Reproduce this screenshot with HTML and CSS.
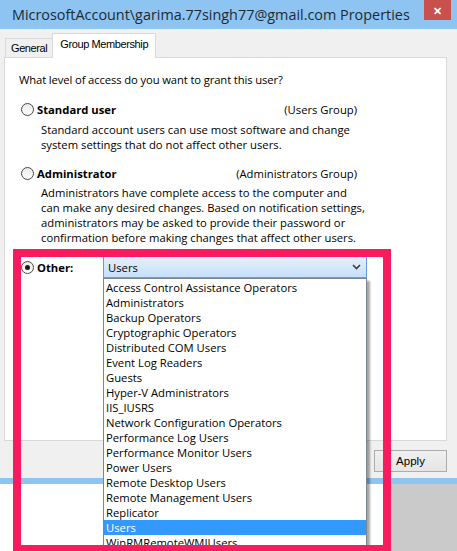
FILE: index.html
```html
<!DOCTYPE html>
<html>
<head>
<meta charset="utf-8">
<link rel="stylesheet" href="styles.css">
</head>
<body>
<div class="window">
  <div class="titlebar">
    <span class="title">MicrosoftAccount\garima.77singh77@gmail.com Properties</span>
    <span class="close">&#x2715;</span>
  </div>
  <div class="winbody">
    <div class="tabs">
      <div class="tab">General</div>
      <div class="tab active">Group Membership</div>
    </div>
    <div class="panel">
      <p class="question">What level of access do you want to grant this user?</p>
      <div class="opt-head"><span class="radio"></span><b class="opt-name">Standard user</b><span class="group">(Users Group)</span></div>
      <p class="desc">Standard account users can use most software and change<br>system settings that do not affect other users.</p>
      <div class="opt-head second"><span class="radio"></span><b class="opt-name">Administrator</b><span class="group">(Administrators Group)</span></div>
      <p class="desc">Administrators have complete access to the computer and<br>can make any desired changes. Based on notification settings,<br>administrators may be asked to provide their password or<br>confirmation before making changes that affect other users.</p>
      <div class="other-row">
        <span class="radio checked"></span><b class="other-label">Other:</b>
        <div class="combo">
          <span>Users</span>
          <svg class="chev" width="9" height="6" viewBox="0 0 9 6"><path d="M1 1 L4.5 4.5 L8 1" fill="none" stroke="#3c3c3c" stroke-width="1.6"/></svg>
          <ul class="droplist">
            <li>Access Control Assistance Operators</li>
            <li>Administrators</li>
            <li>Backup Operators</li>
            <li>Cryptographic Operators</li>
            <li>Distributed COM Users</li>
            <li>Event Log Readers</li>
            <li>Guests</li>
            <li>Hyper-V Administrators</li>
            <li>IIS_IUSRS</li>
            <li>Network Configuration Operators</li>
            <li>Performance Log Users</li>
            <li>Performance Monitor Users</li>
            <li>Power Users</li>
            <li>Remote Desktop Users</li>
            <li>Remote Management Users</li>
            <li>Replicator</li>
            <li class="sel">Users</li>
            <li>WinRMRemoteWMIUsers</li>
          </ul>
        </div>
      </div>
    </div>
    <div class="buttons">
      <span class="btn"></span>
      <span class="btn"></span>
      <span class="btn">Apply</span>
    </div>
  </div>
</div>
<div class="desktop"><div class="behind"></div></div>
<div class="highlight"></div>
</body>
</html>
```
FILE: styles.css
```css
html, body {
  margin: 0;
  padding: 0;
}
body {
  width: 457px;
  height: 551px;
  overflow: hidden;
  background: #cacaca;
  font-family: "Open Sans", "Noto Sans", sans-serif;
  font-size: 11.25px;
  color: #000;
  position: relative;
}
.window {
  background: #f0f0f0;
  border-bottom: 6px solid #8ec4f1;
}
.titlebar {
  height: 29px;
  background: #8dc4f2;
  display: flex;
  align-items: flex-start;
  justify-content: space-between;
}
.title {
  font-size: 14.4px;
  line-height: 30px;
  padding-left: 12px;
  color: #1f2a33;
}
.close {
  width: 27px;
  height: 20px;
  margin-right: 6px;
  background: #c8504d;
  color: #fff;
  font-size: 11px;
  font-weight: bold;
  display: flex;
  align-items: center;
  justify-content: center;
}
.winbody {
  padding: 4px 10px 0 4px;
}
.tabs {
  display: flex;
  align-items: flex-end;
  height: 24px;
  padding-left: 1px;
  position: relative;
  z-index: 1;
}
.tab {
  height: 19px;
  line-height: 19px;
  padding: 0 5px;
  border: 1px solid #d9d9d9;
  border-bottom: none;
  background: #f0f0f0;
  box-sizing: border-box;
  font-family: "Liberation Sans", Arial, sans-serif;
  font-size: 11px;
  letter-spacing: -0.4px;
}
.tab.active {
  height: 25px;
  background: #fff;
  line-height: 21px;
  padding: 0 7px;
  margin-bottom: -1px;
  margin-left: -1px;
}
.panel {
  background: #fff;
  border: 1px solid #d9d9d9;
  padding: 14px 0 0 14px;
  box-sizing: border-box;
  height: 384px;
}
.question {
  margin: 0;
  line-height: 15px;
  letter-spacing: -0.12px;
}
.opt-head {
  display: flex;
  align-items: center;
  width: 336px;
  height: 15px;
  margin-top: 15px;
  margin-left: 2px;
}
.opt-head.second {
  margin-top: 14px;
}
.radio {
  width: 11px;
  height: 11px;
  border: 1px solid #4a4a4a;
  border-radius: 50%;
  background: linear-gradient(#eaeaea, #fdfdfd);
  flex: none;
  position: relative;
}
.radio.checked::after {
  content: "";
  position: absolute;
  left: 3px;
  top: 3px;
  width: 5px;
  height: 5px;
  border-radius: 50%;
  background: #1a1a1a;
}
.opt-name {
  margin-left: 3px;
  flex: 1;
}
.group {
  white-space: nowrap;
}
.desc {
  margin: 5px 0 0 22px;
  line-height: 15px;
  white-space: nowrap;
}
.opt-head.second + .desc {
  margin-top: 4px;
}
.other-row {
  display: flex;
  align-items: center;
  margin-top: 11px;
  margin-left: 2px;
}
.other-label {
  margin-left: 3px;
  width: 66px;
}
.combo {
  position: relative;
  width: 264px;
  height: 22px;
  box-sizing: border-box;
  border: 1px solid #5aa1e6;
  background: linear-gradient(#e3f0fd, #c6e0fb);
  display: flex;
  align-items: center;
  justify-content: space-between;
  padding: 0 5px 0 4px;
}
.chev {
  display: block;
}
.droplist {
  position: absolute;
  left: -1px;
  top: 21px;
  width: 264px;
  height: 280px;
  margin: 0;
  padding: 1px 0 0 0;
  list-style: none;
  background: #fff;
  border: 1px solid #7a8793;
  box-sizing: border-box;
  box-shadow: 3px 3px 2px rgba(0, 0, 0, 0.35);
  overflow: hidden;
  z-index: 5;
}
.droplist li {
  height: 15px;
  line-height: 15px;
  padding-left: 2px;
  white-space: nowrap;
}
.droplist li.sel {
  background: #3399ff;
  color: #fff;
}
.buttons {
  display: flex;
  justify-content: flex-end;
  gap: 9px;
  padding: 9px 0 6px 0;
}
.btn {
  width: 73px;
  height: 22px;
  box-sizing: border-box;
  border: 1px solid #acacac;
  background: linear-gradient(#f0f0f0, #e5e5e5);
  display: flex;
  align-items: center;
  justify-content: center;
  font-family: "Liberation Sans", Arial, sans-serif;
  font-size: 11.5px;
}
.desktop {
  height: 70px;
}
.behind {
  width: 386px;
  height: 100%;
  background: #fff;
}
.highlight {
  position: absolute;
  left: 13px;
  top: 249px;
  width: 378px;
  height: 302px;
  box-sizing: border-box;
  border: 8px solid #f91b5d;
  border-bottom-width: 6px;
  z-index: 10;
  pointer-events: none;
}
```
